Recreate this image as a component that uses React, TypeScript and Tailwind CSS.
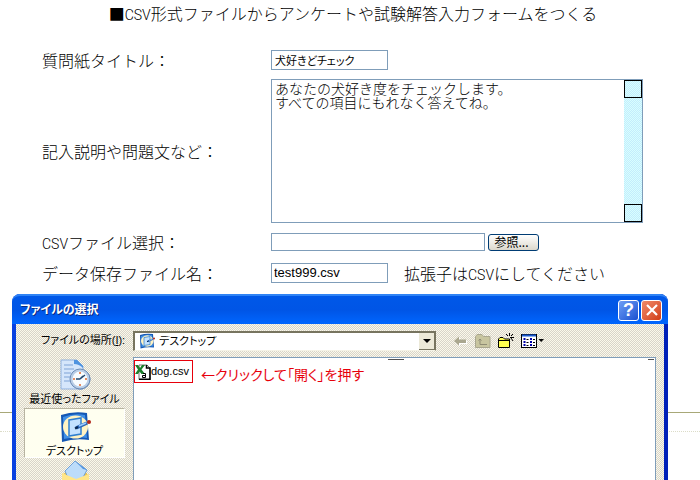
import * as React from "react";

const UI = "font-['Liberation_Sans','Noto_Sans_CJK_JP',sans-serif]";
const CJK = "font-['Noto_Sans_CJK_JP',sans-serif]";

function Csv() {
  return <span className="font-['Roboto',sans-serif] text-sm leading-none">CSV</span>;
}

function DesktopIcon({ className }: { className: string }) {
  return (
    <svg viewBox="0 0 32 32" className={className} aria-hidden="true">
      <path d="M2 4 Q14 0 28 2 L30 29 Q16 27 3 31 Z" fill="#1558b4" />
      <path d="M4 6 Q15 2 26 4 L28 27 Q16 25 5 28 Z" fill="#3f8fe6" />
      <ellipse cx="16.500" cy="16" rx="12.500" ry="11.500" fill="#fff3c4" />
      <path d="M10 9 L22 7 V23 L10 25 Z" fill="#c4e2ff" stroke="#2f7fd0" strokeWidth="1.500" />
      <path d="M17 17 L28 12" stroke="#2b66b8" strokeWidth="3.500" />
      <path d="M20 15 L27 12" stroke="#9cccff" strokeWidth="1.500" />
      <path d="M16 17.500 L19 16" stroke="#0a2850" strokeWidth="2" />
      <circle cx="30" cy="11" r="2" fill="#b02418" />
    </svg>
  );
}

function RecentIcon() {
  return (
    <svg viewBox="0 0 32 32" className="h-8 w-8" aria-hidden="true">
      <path d="M2 1 H18 L24 7 V30 H2 Z" fill="#d5e6fb" stroke="#8fb0dd" />
      <path d="M15 1 H18 L24 7 V9 Q20 5 15 5 Z" fill="#4e93e0" />
      <path d="M5 6 H14 M5 10 H15 M5 14 H12 M5 18 H11 M5 22 H11" stroke="#7fa3d6" />
      <circle cx="21.500" cy="20.500" r="10" fill="#7a92b0" />
      <circle cx="21" cy="20" r="10" fill="#b9cde6" stroke="#6c8db8" />
      <circle cx="21" cy="20" r="7.500" fill="#f7fcff" />
      <path d="M21 20 L26 16 M21 20 L17 20 M21 20 L24 17" stroke="#22476f" strokeWidth="1.500" />
      <path d="M21 13 v2 M21 25 v2 M14 20 h2 M26 20 h2" stroke="#e0672f" strokeWidth="1.500" />
    </svg>
  );
}

function DocumentsIcon() {
  return (
    <svg viewBox="0 0 32 32" className="h-8 w-8" aria-hidden="true">
      <path d="M3 15 L8 11 L28 13 L30 30 H4 Z" fill="#efc64e" />
      <path d="M6 11 L16 1 L28 10 L22 21 L9 18 Z" fill="#bcdcfa" stroke="#6f9fd6" />
      <path d="M16 1 L28 10 L24 9 Z" fill="#4e93e0" />
      <path d="M3 13 L17 19 L30 14 V31 H3 Z" fill="#ffe68a" />
    </svg>
  );
}

function CsvIcon() {
  return (
    <svg viewBox="0 0 16 16" className="h-4 w-4 shrink-0" aria-hidden="true">
      <path d="M4 1 H12 L15 4 V15.500 H4 Z" fill="#fff" stroke="#777" />
      <path d="M11.500 1 V4 H15 V15.300 H4" fill="none" stroke="#000" strokeWidth="1.500" />
      <path d="M0 1 H3 L5 4 L7 1 H10 L6.500 5.500 L10 10 H6.500 L4.500 7.500 L3 10 H0 L3 5.500 Z" fill="#1c7f2c" />
      <path d="M8 9.500 h2.500 v4 h-3 v-2 h3" fill="none" stroke="#000" />
    </svg>
  );
}

function Toolbar() {
  return (
    <div className="ml-4 flex items-center gap-[7px]">
      <button type="button" aria-label="戻る" className="h-4 w-4">
        <svg viewBox="0 0 16 16" className="h-4 w-4">
          <path d="M3 9 L8 4.500 V7.500 H15 V11 H8 V13.500 Z" fill="#fff" />
          <path d="M2 8 L7 3.500 V6.500 H14 V10 H7 V12.500 Z" fill="#aaa78f" />
        </svg>
      </button>
      <button type="button" aria-label="一つ上のフォルダへ" className="h-4 w-4">
        <svg viewBox="0 0 16 16" className="h-4 w-4">
          <path d="M.5 14.500 V3.500 L2 1.500 H7 L8.500 3.500 H15 V14.500 Z" fill="#c8c59f" stroke="#aaa78f" />
          <path d="M5 11.500 V6 M3.500 7.500 L5 6 L6.500 7.500 M5 11.500 H12" fill="none" stroke="#8f8c74" />
        </svg>
      </button>
      <button type="button" aria-label="新しいフォルダの作成" className="h-4 w-4">
        <svg viewBox="0 0 16 16" className="h-4 w-4">
          <path d="M.5 14.500 V6 L2 4.500 H5 L6.500 6 H11.500 V14.500 Z" fill="#ffff50" stroke="#000" />
          <path d="M1 7.500 H11" stroke="#000" />
          <path d="M11.500 0 V3 M11.500 6 V8 M8 1 L10 3 M15 1 L13 3 M13 5 L15 8 M12 4.500 H16" stroke="#000" />
        </svg>
      </button>
      <button type="button" aria-label="表示" className="h-4 w-6">
        <svg viewBox="0 0 24 16" className="h-4 w-6">
          <rect x=".5" y="1.500" width="15" height="13" fill="#fff" stroke="#000" />
          <path d="M1 2.500 H15" stroke="#1c5bd0" strokeWidth="2" />
          <path d="M2.500 6 h2 M2.500 9 h2 M2.500 12 h2 M9 6 h2 M9 9 h2 M9 12 h2" stroke="#0000a8" strokeWidth="2" />
          <path d="M5.500 6.500 h2 M5.500 9.500 h2 M5.500 12.500 h2 M12 6.500 h2 M12 9.500 h2 M12 12.500 h2" stroke="#000" />
          <path d="M17.500 6 H23 L20.200 9 Z" fill="#000" />
        </svg>
      </button>
    </div>
  );
}

function FileDialog() {
  return (
    <section
      role="dialog"
      aria-labelledby="dialog-title"
      className={`relative ml-3 mr-8 flex grow flex-col rounded-t-lg border-x-4 border-l-[#0840e0] border-r-[#0020b8] bg-[#0054f0] text-[11px] font-normal [font-feature-settings:'palt'] ${UI}`}
    >
      <header className="-mx-1 flex h-[30px] items-center gap-0.5 rounded-t-lg border-t-2 border-[#2f83f5] bg-linear-to-b from-[#0058e8] via-[#0055e6] to-[#0066ff] pl-2 pr-1.5">
        <h2 id="dialog-title" className="grow text-xs font-bold text-white [text-shadow:1px_1px_#0a2a80]">
          ファイルの選択
        </h2>
        <button type="button" aria-label="ヘルプ" className="flex h-[21px] w-[21px] items-center justify-center rounded-[3px] border border-white bg-linear-to-br from-[#6f9df5] to-[#1a4fd0] text-lg font-bold leading-none text-white">
          ?
        </button>
        <button type="button" aria-label="閉じる" className="flex h-[21px] w-[21px] items-center justify-center rounded-[3px] border border-white bg-linear-to-br from-[#f08a68] to-[#d03a10]">
          <svg viewBox="0 0 16 16" className="h-4 w-4">
            <path d="M3 3 L13 13 M13 3 L3 13" stroke="#fff" strokeWidth="2.200" />
          </svg>
        </button>
      </header>

      <div className="flex grow flex-col bg-[#ece9d8] bg-[repeating-conic-gradient(#d8d4ca_0_25%,#fbf9ea_0_50%)] bg-[length:2px_2px] px-2">
        <div className="flex h-[33px] items-center">
          <label htmlFor="place" className="w-[109px] whitespace-nowrap pl-[17px]">
            ファイルの場所(<u>I</u>):
          </label>
          <div className="relative flex h-5 w-[303px] items-center border border-l-2 border-t-2 border-[#77745f] border-b-[#f5f3e6] bg-white">
            <DesktopIcon className="ml-1 h-4 w-4 shrink-0" />
            <select id="place" className="h-full grow appearance-none bg-transparent pl-1 leading-none outline-none">
              <option>デスクトップ</option>
            </select>
            <span className="pointer-events-none absolute right-0 top-0 flex h-full w-4 items-center justify-center border-b border-r border-[#77745f] bg-[#ece9d8]">
              <svg viewBox="0 0 8 4" className="h-1 w-2">
                <path d="M0 0 H8 L4 4 Z" fill="#000" />
              </svg>
            </span>
          </div>
          <Toolbar />
        </div>

        <div className="flex grow">
          <nav className="flex w-[101px] flex-col items-center">
            <button type="button" className="flex h-[51px] w-full flex-col items-center justify-start pt-0.5">
              <RecentIcon />
              <span className="whitespace-nowrap leading-4">最近使ったファイル</span>
            </button>
            <button type="button" className="flex h-[50px] w-full flex-col items-center justify-start border border-l-[#b8b4a2] border-t-[#b8b4a2] border-b-white border-r-white bg-[#fffff0] pt-0.5">
              <DesktopIcon className="h-8 w-8 shrink-0" />
              <span className="leading-4">デスクトップ</span>
            </button>
            <button type="button" aria-label="マイ ドキュメント" className="flex w-full flex-col items-center pt-0.5">
              <DocumentsIcon />
            </button>
          </nav>
          <div className="ml-2 flex grow items-start border border-b-0 border-[#7f9db9] bg-white pt-px pr-px">
            <button type="button" className="mt-px flex h-[23px] w-[59px] items-center border border-red-600">
              <CsvIcon />
              <span>dog.csv</span>
            </button>
            <p className={`ml-2 mt-px text-sm leading-7 text-red-600 ${CJK}`}>←クリックして「開く」を押す</p>
            <span className="ml-6 h-px w-4 bg-neutral-600" />
            <span className="ml-auto h-px w-1.5 bg-neutral-600" />
          </div>
        </div>
      </div>
    </section>
  );
}

export default function App() {
  return (
    <main className={`flex h-screen flex-col overflow-hidden bg-white text-base font-light text-black ${CJK}`}>
      <h1 className="pt-px pl-1.5 text-center leading-6">
        ■<Csv />形式ファイルからアンケートや試験解答入力フォームをつくる
      </h1>

      <form className="mt-[23px] grid grid-cols-[229px_1fr] items-center gap-y-[7px] pl-[42px] leading-6">
        <label htmlFor="title">質問紙タイトル：</label>
        <div>
          <input id="title" defaultValue="犬好きどチェック" className="block h-5 w-[117px] border border-[#7f9db9] px-[3px] text-[11px] font-normal [font-feature-settings:'palt'] outline-none" />
        </div>

        <label htmlFor="note">記入説明や問題文など：</label>
        <div className="flex h-36 w-[372px] border border-[#7f9db9]">
          <textarea
            id="note"
            defaultValue={"あなたの犬好き度をチェックします。\nすべての項目にもれなく答えてね。"}
            className="grow resize-none overflow-hidden px-[3px] pt-px text-sm leading-[14px] outline-none"
          />
          <div className="flex w-[18px] flex-col justify-between bg-[#ccffff] bg-[repeating-conic-gradient(#c4ecfc_0_25%,#d8ffff_0_50%)] bg-[length:2px_2px]">
            <span className="h-[18px] border border-black" />
            <span className="h-[18px] border border-black" />
          </div>
        </div>

        <label htmlFor="csv"><Csv />ファイル選択：</label>
        <div className="flex items-center gap-[3px]">
          <input id="csv" className="h-[18px] w-[214px] border border-[#7f9db9] px-[3px] text-xs outline-none" />
          <button type="button" className="h-[17px] w-[51px] rounded-[3px] border border-[#003c74] bg-linear-to-b from-white to-[#dcd8cc] pr-1 text-xs font-normal leading-none">
            参照...
          </button>
        </div>

        <label htmlFor="save">データ保存ファイル名：</label>
        <div className="flex items-center gap-4">
          <input id="save" defaultValue="test999.csv" className={`h-5 w-[117px] border border-[#7f9db9] px-0.5 text-[13px] outline-none ${UI}`} />
          <span>拡張子は<Csv />にしてください</span>
        </div>
      </form>

      <div className="relative mt-[9px] flex grow">
        <div className="absolute inset-x-0 top-[118px] h-5 border-b border-t border-b-[#dcdcc8] border-t-[#a8a878] [border-bottom-style:dotted]" />
        <FileDialog />
      </div>
    </main>
  );
}
